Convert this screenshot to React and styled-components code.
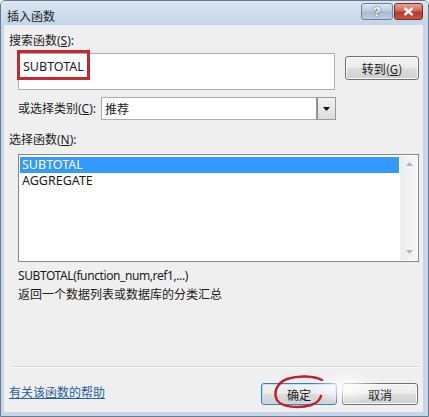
import React from "react";
import styled, { createGlobalStyle } from "styled-components";

const GlobalStyle = createGlobalStyle`
  html, body {
    margin: 0;
    padding: 0;
    background: #ffffff;
  }
  body {
    font-family: "Noto Sans", "Noto Sans CJK SC", sans-serif;
    font-size: 12px;
    color: #1a1a1a;
  }
`;

const Window = styled.div`
  position: relative;
  width: 429px;
  height: 417px;
  box-sizing: border-box;
  display: flex;
  flex-direction: column;
  background: #c6d7ec;
  border: 1px solid #6b7b8e;
  border-radius: 5px 5px 0 0;
  overflow: hidden;
`;

const TitleBar = styled.div`
  height: 24px;
  flex: none;
  display: flex;
  align-items: flex-start;
  justify-content: space-between;
  padding-left: 6px;
  background: linear-gradient(#dbe6f3, #c3d5ea);
`;

const Title = styled.div`
  margin-top: 6px;
  font-family: "Noto Sans CJK SC", sans-serif;
  font-size: 12px;
  color: #1c1c1c;
`;

const TitleButtons = styled.div`
  display: flex;
  gap: 1px;
  margin-top: 2px;
  margin-right: 5px;
`;

const CaptionButton = styled.div`
  width: ${p => p.$w}px;
  height: 17px;
  box-sizing: border-box;
  display: flex;
  align-items: center;
  justify-content: center;
  border: 1px solid ${p => (p.$close ? "#7a2a22" : "#6f7f94")};
  border-radius: 3px;
  background: ${p =>
    p.$close
      ? "linear-gradient(#e7a594, #cc6a56 45%, #b23a2a 55%, #c9553f)"
      : "linear-gradient(#dfe8f3, #bccbdd 45%, #a7b9cf 55%, #c0d0e3)"};
  color: #fff;
  font-family: "Liberation Sans", sans-serif;
  font-size: 12px;
  font-weight: bold;
  text-shadow: 0 0 2px #333;
`;

const Client = styled.div`
  flex: 1;
  margin: 0 5px 4px 3px;
  background: #f0eff0;
  display: flex;
  flex-direction: column;
  padding: 8px 4px 0 5px;
  font-family: "Noto Sans", "Noto Sans CJK SC", sans-serif;
`;

const Label = styled.div`
  line-height: 16px;
  margin-left: ${p => p.$indent || 0}px;
  margin-top: ${p => p.$mt || 0}px;
  white-space: nowrap;
`;

const SearchRow = styled.div`
  display: flex;
  align-items: flex-start;
  margin-top: 4px;
  margin-left: 9px;
`;

const SearchBox = styled.div`
  position: relative;
  width: 317px;
  height: 37px;
  box-sizing: border-box;
  background: #fff;
  border: 1px solid #acacac;
  padding: 5px 0 0 4px;
  font-size: 12.5px;
  line-height: 16px;
`;

const RedBox = styled.div`
  position: absolute;
  left: -2px;
  top: -4px;
  width: 73px;
  height: 30px;
  box-sizing: border-box;
  border: 3px solid #c8272e;
`;

const Button = styled.div`
  width: ${p => p.$w}px;
  height: ${p => p.$h || 22}px;
  box-sizing: border-box;
  margin-top: ${p => p.$mt || 0}px;
  margin-left: ${p => p.$ml || 0}px;
  display: flex;
  align-items: center;
  justify-content: center;
  border: 1px solid ${p => (p.$default ? "#3c7fb1" : "#707070")};
  border-radius: 3px;
  background: linear-gradient(#f2f2f2, #ebebeb 50%, #dddddd 51%, #cfcfcf);
  box-shadow: inset 0 0 0 1px ${p => (p.$default ? "#b9e3f8" : "#fbfbfb")};
  font-family: "Noto Sans CJK SC", sans-serif;
  font-size: 12px;
  color: #1a1a1a;
`;

const CategoryRow = styled.div`
  display: flex;
  align-items: center;
  margin-top: 7px;
  margin-left: 9px;
`;

const Select = styled.div`
  display: flex;
  width: 235px;
  height: 23px;
  margin-left: 5px;
  box-sizing: border-box;
  background: #fff;
  border: 1px solid #acacac;
`;

const SelectText = styled.div`
  flex: 1;
  padding-left: 3px;
  line-height: 21px;
  font-family: "Noto Sans CJK SC", sans-serif;
`;

const DropButton = styled.div`
  width: 17px;
  border-left: 1px solid #8a8a8a;
  outline: 1px solid #9a9a9a;
  display: flex;
  align-items: center;
  justify-content: center;
  background: linear-gradient(#f3f3f3, #dcdcdc);
`;

const ListBox = styled.div`
  display: flex;
  margin-top: 6px;
  margin-left: 9px;
  width: 401px;
  height: 108px;
  box-sizing: border-box;
  border: 1px solid #828790;
  background: #fff;
  padding: 1px;
`;

const Items = styled.div`
  flex: 1;
  padding-top: 1px;
`;

const Item = styled.div`
  height: 16px;
  line-height: 16px;
  padding-left: 2px;
  margin-right: 1px;
  font-size: 12.5px;
  background: ${p => (p.$selected ? "#3399ff" : "transparent")};
  color: ${p => (p.$selected ? "#fff" : "#1a1a1a")};
`;

const ScrollBar = styled.div`
  width: 17px;
  display: flex;
  flex-direction: column;
  justify-content: space-between;
  align-items: center;
  background: linear-gradient(90deg, #ececec, #f6f6f6);
  border-left: 1px solid #f0f0f0;
  padding: 6px 0;
  box-sizing: border-box;
`;

const Syntax = styled.div`
  margin-top: 5px;
  margin-left: 9px;
  line-height: 18px;
  font-size: 12px;
  letter-spacing: -0.4px;
`;

const Desc = styled.div`
  margin-left: 9px;
  line-height: 18px;
  font-family: "Noto Sans CJK SC", sans-serif;
  font-size: 12px;
`;

const Separator = styled.div`
  margin-top: 63px;
  margin-left: 3px;
  height: 1px;
  background: #d6d6d6;
  border-bottom: 1px solid #fbfbfb;
`;

const Footer = styled.div`
  display: flex;
  align-items: center;
  justify-content: space-between;
  margin-top: 15px;
`;

const HelpLink = styled.a`
  font-family: "Noto Sans CJK SC", sans-serif;
  font-size: 12px;
  color: #1d5d9e;
  text-decoration: underline;
  margin-top: -5px;
`;

const ButtonGroup = styled.div`
  position: relative;
  display: flex;
  gap: 5px;
  margin-right: 1px;
`;

const Circle = styled.svg`
  position: absolute;
  left: 8px;
  top: -9px;
  pointer-events: none;
`;

const Smudge = styled.div`
  position: absolute;
  left: 50px;
  top: -12px;
  width: 70px;
  height: 34px;
  border-radius: 50%;
  background: radial-gradient(rgba(255, 255, 255, 0.95), rgba(255, 255, 255, 0) 70%);
  pointer-events: none;
`;

const Arrow = ({ up, color = "#9a9a9a" }) => (
  <svg width="7" height="4" viewBox="0 0 7 4">
    <path d={up ? "M0 4 L3.5 0 L7 4 Z" : "M0 0 L3.5 4 L7 0 Z"} fill={color} />
  </svg>
);

export default function App() {
  return (
    <>
      <GlobalStyle />
      <Window>
        <TitleBar>
          <Title>插入函数</Title>
          <TitleButtons>
            <CaptionButton $w={32}>?</CaptionButton>
            <CaptionButton $w={29} $close>
              <svg width="11" height="9" viewBox="0 0 11 9">
                <path d="M1.5 1 L9.5 8 M9.5 1 L1.5 8" stroke="#fff" strokeWidth="2.4" />
              </svg>
            </CaptionButton>
          </TitleButtons>
        </TitleBar>
        <Client>
          <Label>
            搜索函数(<u>S</u>):
          </Label>
          <SearchRow>
            <SearchBox>
              SUBTOTAL
              <RedBox />
            </SearchBox>
            <Button $w={74} $h={24} $mt={3} $ml={10}>
              转到(<u>G</u>)
            </Button>
          </SearchRow>
          <CategoryRow>
            <Label>
              或选择类别(<u>C</u>):
            </Label>
            <Select>
              <SelectText>推荐</SelectText>
              <DropButton>
                <Arrow color="#111" />
              </DropButton>
            </Select>
          </CategoryRow>
          <Label $mt={12}>
            选择函数(<u>N</u>):
          </Label>
          <ListBox>
            <Items>
              <Item $selected>SUBTOTAL</Item>
              <Item>AGGREGATE</Item>
            </Items>
            <ScrollBar>
              <Arrow up color="#b5b5b5" />
              <Arrow color="#b5b5b5" />
            </ScrollBar>
          </ListBox>
          <Syntax>SUBTOTAL(function_num,ref1,...)</Syntax>
          <Desc>返回一个数据列表或数据库的分类汇总</Desc>
          <Separator />
          <Footer>
            <HelpLink>有关该函数的帮助</HelpLink>
            <ButtonGroup>
              <Button $w={76} $default>
                确定
              </Button>
              <Button $w={76}>取消</Button>
              <Smudge />
              <Circle width="62" height="38" viewBox="0 0 62 38">
                <path
                  d="M53 6 C45 2 30 1 18 5 C8 9 4 18 8 26 C12 33 30 35 42 31 C48 29 51 26 52 22"
                  fill="none"
                  stroke="#c0202a"
                  strokeWidth="2.5"
                  strokeLinecap="round"
                />
              </Circle>
            </ButtonGroup>
          </Footer>
        </Client>
      </Window>
    </>
  );
}
